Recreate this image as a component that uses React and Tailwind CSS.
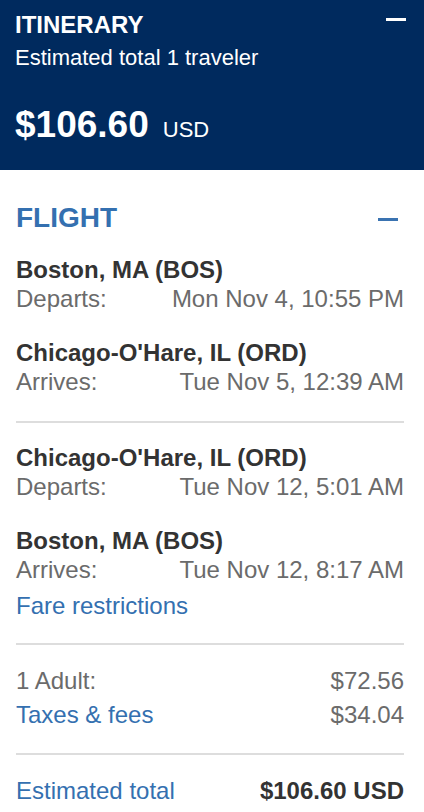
import React from "react";

const font = { fontFamily: '"Liberation Sans", Arial, Helvetica, sans-serif' };

function Segment({ city, label, value }) {
  return (
    <div>
      <div className="text-[24px] leading-[29px] font-bold text-[#333333]">{city}</div>
      <div className="flex justify-between text-[24px] leading-[29px] text-[#6b6b6b]">
        <span>{label}</span>
        <span>{value}</span>
      </div>
    </div>
  );
}

function Divider() {
  return <div className="h-[2px] bg-[#dddddd]" />;
}

export default function App() {
  return (
    <div className="w-[424px] min-h-[812px] bg-white" style={font}>
      <div className="bg-[#002a5e] h-[170px] pl-[15px] pr-[18px] pt-[11px] text-white">
        <div className="flex justify-between items-start">
          <div className="text-[24px] leading-[28px] font-bold">ITINERARY</div>
          <div className="w-5 h-[3px] bg-white mt-[7px]" />
        </div>
        <div className="mt-[6px] text-[22px] leading-[26px]">Estimated total 1 traveler</div>
        <div className="mt-[34px] flex items-baseline leading-[40px]">
          <span className="text-[37px] font-bold">$106.60</span>
          <span className="ml-[14px] text-[22px]">USD</span>
        </div>
      </div>

      <div className="pl-4 pr-5">
        <div className="pt-[32px] flex justify-between items-start">
          <div className="text-[28px] leading-[32px] font-bold text-[#3470b0]">FLIGHT</div>
          <div className="w-5 h-[3px] bg-[#3a73b1] mt-[16px] mr-[6px]" />
        </div>

        <div className="mt-[21px] flex flex-col gap-[25px]">
          <Segment city="Boston, MA (BOS)" label="Departs:" value="Mon Nov 4, 10:55 PM" />
          <Segment city="Chicago-O'Hare, IL (ORD)" label="Arrives:" value="Tue Nov 5, 12:39 AM" />
        </div>

        <div className="mt-[25px]">
          <Divider />
        </div>

        <div className="mt-[20px] flex flex-col gap-[25px]">
          <Segment city="Chicago-O'Hare, IL (ORD)" label="Departs:" value="Tue Nov 12, 5:01 AM" />
          <Segment city="Boston, MA (BOS)" label="Arrives:" value="Tue Nov 12, 8:17 AM" />
        </div>

        <div className="mt-[7px] text-[24px] leading-[29px] text-[#3470b0]">Fare restrictions</div>

        <div className="mt-[23px]">
          <Divider />
        </div>

        <div className="mt-[21px] flex flex-col gap-[5px] text-[24px] leading-[29px]">
          <div className="flex justify-between text-[#6b6b6b]">
            <span>1 Adult:</span>
            <span>$72.56</span>
          </div>
          <div className="flex justify-between">
            <span className="text-[#3470b0]">Taxes &amp; fees</span>
            <span className="text-[#6b6b6b]">$34.04</span>
          </div>
        </div>

        <div className="mt-[24px]">
          <Divider />
        </div>

        <div className="mt-[21px] flex justify-between text-[24px] leading-[29px]">
          <span className="text-[#3470b0]">Estimated total</span>
          <span className="font-bold text-[#333333]">$106.60 USD</span>
        </div>
      </div>
    </div>
  );
}
